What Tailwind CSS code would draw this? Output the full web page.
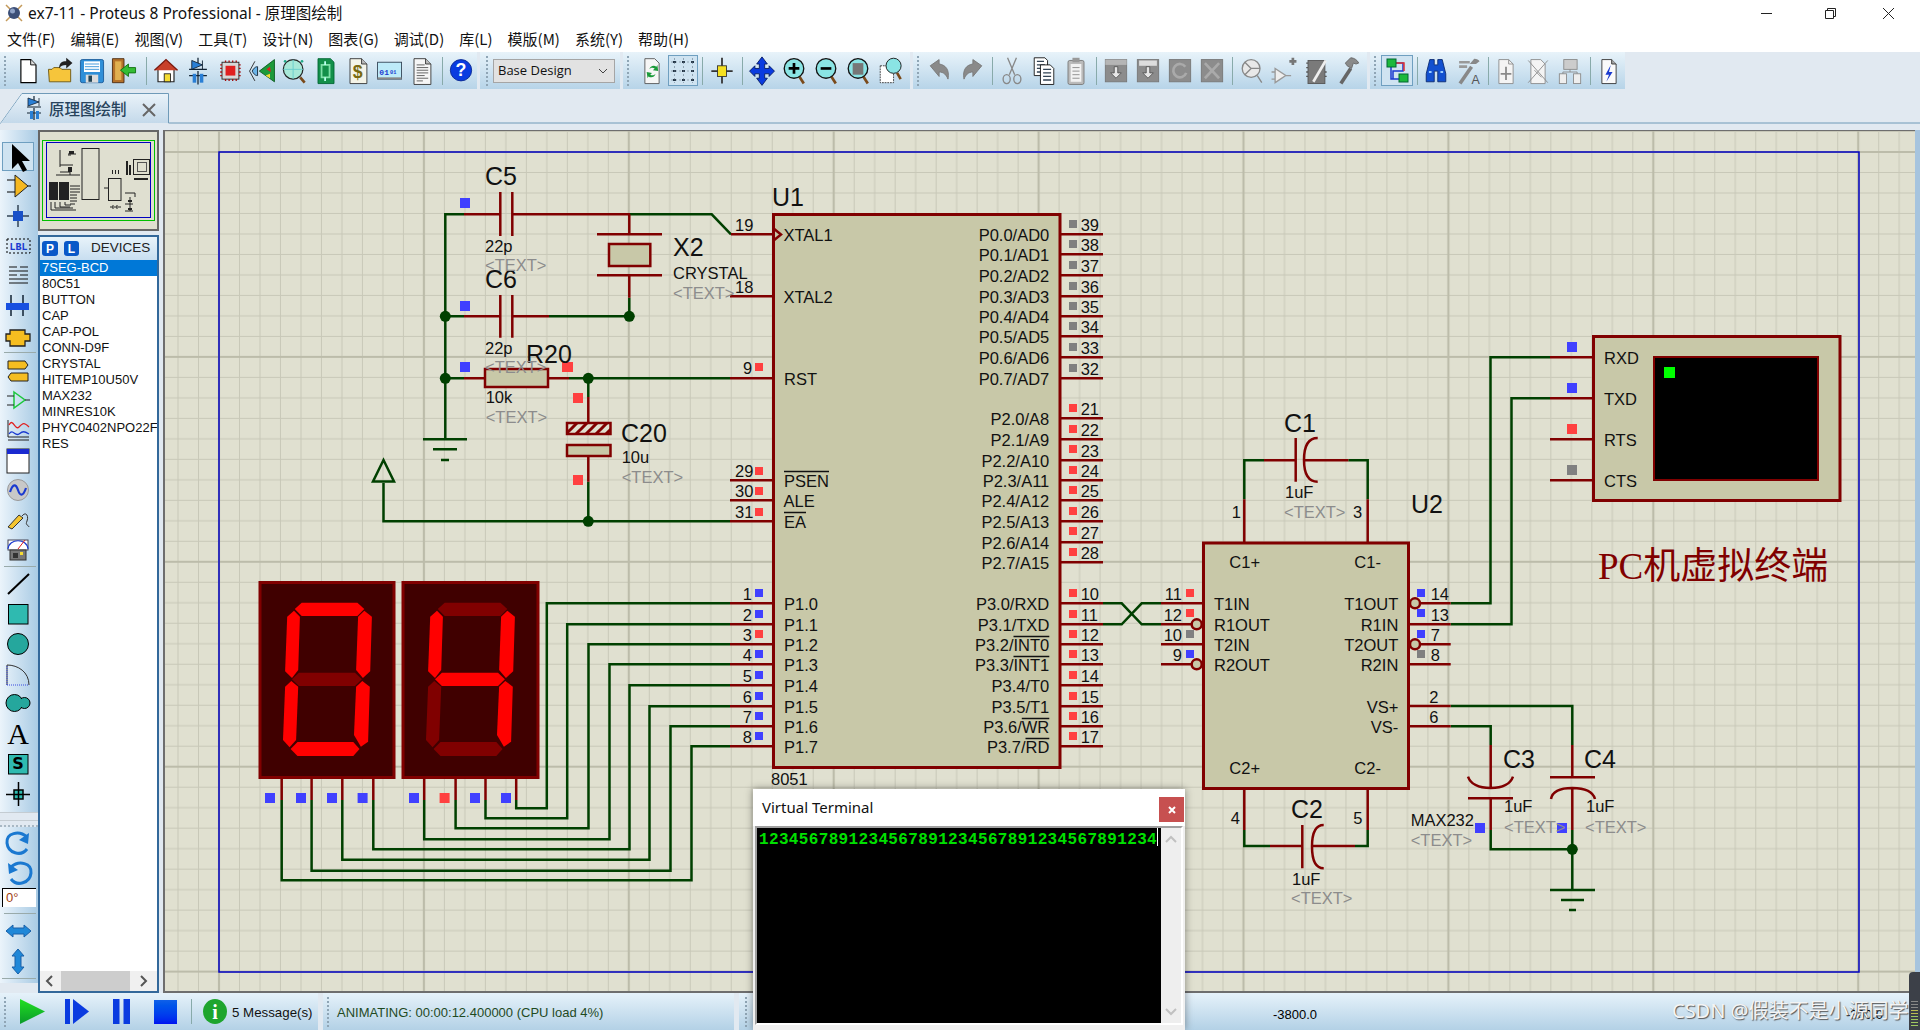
<!DOCTYPE html>
<html lang="zh">
<head>
<meta charset="UTF-8">
<title>ex7-11 - Proteus 8 Professional - 原理图绘制</title>
<script src="https://cdn.jsdelivr.net/npm/@tailwindcss/browser@4"></script>
</head>
<body class="w-[1920px] h-[1030px] overflow-hidden relative bg-[#e1e9f1] font-['Noto_Sans','Noto_Sans_CJK_SC',sans-serif]">
<div class="flex flex-col h-[1030px]">

  <!-- Title bar -->
  <div class="h-[26px] bg-white flex items-center shrink-0 relative">
    <svg class="w-[22px] h-[22px] ml-[3px]" viewBox="0 0 22 22"><path d="M3 3l16 16M19 3L3 19" stroke="#c49a5a" stroke-width="1.5"/><circle cx="11" cy="11" r="6" fill="#3c4f78"/><circle cx="9.500" cy="9" r="2.500" fill="#8fa3c8"/></svg>
    <span class="ml-[3px] mt-[2px] text-[15.5px] text-[#111] whitespace-nowrap">ex7-11 - Proteus 8 Professional - 原理图绘制</span>
    <svg class="absolute left-[1760px] top-0 w-[160px] h-[26px]" viewBox="0 0 160 26" fill="none" stroke="#222"><path d="M1 13.500h11"/><path d="M65.500 10.500h8v8h-8zM67.500 10.500v-2h8v8h-2"/><path d="M123 8l11 11M134 8l-11 11"/></svg>
  </div>

  <!-- Menu bar -->
  <div class="h-[26px] bg-white flex items-center gap-[15px] pl-[7px] text-[15px] text-[#111] shrink-0 font-['Noto_Sans_CJK_SC','Noto_Sans',sans-serif]">
    <span>文件(F)</span><span>编辑(E)</span><span>视图(V)</span><span>工具(T)</span><span>设计(N)</span><span>图表(G)</span><span>调试(D)</span><span>库(L)</span><span>模版(M)</span><span>系统(Y)</span><span>帮助(H)</span>
  </div>

  <!-- Toolbars -->
  <div class="h-[37px] flex shrink-0 gap-[3px]">
    <div class="w-[477px] flex items-center bg-gradient-to-b from-[#e8f3fa] to-[#b7d4e8] pl-[4px]">
      <div class="w-[2px] h-[30px] border-l-2 border-dotted border-[#8fa5b5] mr-[6px]"></div>
      <svg class="w-8 h-[37px] shrink-0" viewBox="-2 -2.500 36 41.600"><path d="M8 6h11l6 6v20H8z" fill="#fff" stroke="#000" stroke-width="1.300"/><path d="M19 6v6h6" fill="#ddd" stroke="#000"/></svg>
      <svg class="w-8 h-[37px] shrink-0" viewBox="-2 -2.500 36 41.600"><path d="M3 17h4l2-2h7l2 2h10v14H4z" fill="#f6c53b" stroke="#6a5410"/><path d="M15 16c0-6 3-8 8-8V4l7 6-7 6v-4c-4 0-6 1-8 4z" fill="#222"/></svg>
      <svg class="w-8 h-[37px] shrink-0" viewBox="-2 -2.500 36 41.600"><rect x="3" y="6" width="26" height="26" rx="2" fill="#2f8fd8" stroke="#1a5a9a"/><rect x="7" y="8" width="18" height="12" fill="#fff"/><path d="M8 11h16M8 14h16M8 17h16" stroke="#2f8fd8"/><rect x="9" y="23" width="14" height="9" fill="#dcdcdc"/><rect x="12" y="24" width="4" height="7" fill="#245"/></svg>
      <svg class="w-8 h-[37px] shrink-0" viewBox="-2 -2.500 36 41.600"><path d="M3 5h13v27H3z" fill="#b5722a" stroke="#4a2a10"/><path d="M6 8h7v21H6z" fill="#e0b050"/><path d="M29 15v6h-8v4l-9-7 9-7v4z" fill="#35bd35" stroke="#0f6f0f"/></svg>
      <div class="w-[7px] h-[28px] border-l border-[#8aa] ml-[3px] mr-[1px] translate-x-[3px]"></div>
      <svg class="w-8 h-[37px] shrink-0" viewBox="-2 -2.500 36 41.600"><path d="M7 17v14h18V17" fill="#fff" stroke="#222" stroke-width="1.300"/><path d="M3 18L16 6l13 12" fill="#c8402a" stroke="#7a1a10" stroke-width="1.500"/><rect x="14" y="22" width="7" height="9" fill="#f5dc32" stroke="#222"/></svg>
      <svg class="w-8 h-[37px] shrink-0" viewBox="-2 -2.500 36 41.600"><path d="M16 4v7M16 19v15M6 17h20M6 24h20" stroke="#123" stroke-width="1.400"/><path d="M9 7l12 5-12 5zM21 7v10" fill="#2a7fd5" stroke="#123"/><rect x="10" y="22" width="4" height="10" fill="#2a7fd5"/><rect x="18" y="22" width="4" height="10" fill="#2a7fd5"/></svg>
      <svg class="w-8 h-[37px] shrink-0" viewBox="-2 -2.500 36 41.600"><rect x="7" y="9" width="19" height="19" fill="#d8d8d8" stroke="#222"/><rect x="11" y="13" width="11" height="11" fill="#e02020"/><path d="M5 12h2M5 16h2M5 20h2M5 24h2M26 12h2M26 16h2M26 20h2M26 24h2M11 7v2M15 7v2M19 7v2M23 7v2M11 28v2M15 28v2M19 28v2M23 28v2" stroke="#a01010" stroke-width="1.500"/></svg>
      <svg class="w-8 h-[37px] shrink-0" viewBox="-2 -2.500 36 41.600"><path d="M2 19l6-11M2 19l6 11" stroke="#222" fill="none"/><path d="M5 19c2-4 4-5 6-5v10c-2 0-4-1-6-5z" fill="#6ab4e8" stroke="#123"/><path d="M30 6v25L13 19z" fill="#1d9a3a" stroke="#0a5a20"/><path d="M21 17l4-3 1 6z" fill="#e02020"/><path d="M20 24l5-2v5z" fill="#f5dc32"/></svg>
      <svg class="w-8 h-[37px] shrink-0" viewBox="-2 -2.500 36 41.600"><circle cx="15" cy="17" r="11" fill="#a8e8d8" stroke="#222" stroke-width="1.400"/><path d="M15 6v22M4 17h22" stroke="#6cc" /><path d="M23 26l5 6" stroke="#7a4a1a" stroke-width="3"/><circle cx="6" cy="8" r="1.500" fill="#2a8" /><circle cx="25" cy="8" r="1.500" fill="#2a8"/></svg>
      <svg class="w-8 h-[37px] shrink-0" viewBox="-2 -2.500 36 41.600"><path d="M7 5h14l4 4v24H7z" fill="#13904a" stroke="#063"/><rect x="11" y="12" width="9" height="14" fill="none" stroke="#7fe0a8" stroke-width="2"/><path d="M15 8v4M15 26v4" stroke="#bfe" stroke-width="2"/></svg>
      <svg class="w-8 h-[37px] shrink-0" viewBox="-2 -2.500 36 41.600"><path d="M7 5h13l6 6v22H7z" fill="#f4f4e8" stroke="#333"/><path d="M20 5v6h6" fill="#bbb" stroke="#333"/><text x="10" y="27" font-size="20" font-weight="700" fill="#7a6a10" class="font-['Liberation_Sans']">$</text></svg>
      <svg class="w-8 h-[37px] shrink-0" viewBox="-2 -2.500 36 41.600"><rect x="2" y="9" width="27" height="19" fill="#bdeaf8" stroke="#345"/><rect x="2" y="26" width="27" height="2" fill="#888"/><text x="4" y="23" font-size="9" font-weight="700" fill="#1a3ad0" class="font-['Liberation_Mono']">01</text><text x="16" y="22" font-size="6" font-weight="700" fill="#1a3ad0" class="font-['Liberation_Mono']">01</text></svg>
      <svg class="w-8 h-[37px] shrink-0" viewBox="-2 -2.500 36 41.600"><path d="M7 5h13l6 6v23H7z" fill="#f6f6f6" stroke="#333"/><path d="M20 5v6h6" fill="#bbb" stroke="#333"/><path d="M10 12h9M10 15h13M10 18h13M10 21h13M10 24h9M10 27h13M10 30h7" stroke="#555"/></svg>
      <div class="w-2 h-[28px] border-l border-[#8aa] translate-x-[4px]"></div>
      <svg class="w-8 h-[37px] shrink-0" viewBox="-2 -2.500 36 41.600"><circle cx="16" cy="18" r="12" fill="#0a3be0" stroke="#0a2a90"/><text x="16" y="25" text-anchor="middle" font-size="20" font-weight="700" fill="#fff" class="font-['Liberation_Sans']">?</text></svg>
    </div>
    <div class="w-[140px] flex items-center bg-gradient-to-b from-[#e8f3fa] to-[#b7d4e8] pl-[6px]">
      <div class="w-[2px] h-[30px] border-l-2 border-dotted border-[#8fa5b5] mr-[5px]"></div>
      <div class="w-[122px] h-[24px] bg-[#e2e2e2] border border-[#a5a5a5] flex items-center justify-between pl-[4px] pr-[6px] text-[13px] text-[#111] font-['Open_Sans',sans-serif]">
        <span>Base Design</span>
        <svg class="w-[10px] h-[6px]" viewBox="0 0 10 6" fill="none" stroke="#444"><path d="M1 1l4 4 4-4"/></svg>
      </div>
    </div>
    <div class="w-[287px] flex items-center bg-gradient-to-b from-[#e8f3fa] to-[#b7d4e8] pl-[4px]">
      <div class="w-[2px] h-[30px] border-l-2 border-dotted border-[#8fa5b5] mr-[7px]"></div>
      <svg class="w-8 h-[37px] shrink-0" viewBox="-2 -2.500 36 41.600"><path d="M8 5h11l5 5v23H8z" fill="#f6f6f6" stroke="#555"/><path d="M13 17c1-4 5-5 8-3l1-2 1 7-6-1 2-2c-2-1-4-1-6 1z" fill="#1c9a3a"/><path d="M20 22c-1 4-5 5-8 3l-1 2-1-7 6 1-2 2c2 1 4 1 6-1z" fill="#1c9a3a"/></svg>
      <div class="w-[30px] h-[31px] bg-[#cfe3f1] border border-[#6f9fc0] shrink-0 flex items-center justify-center"><svg class="w-[26px] h-[27px]" viewBox="0 0 26 27" fill="#234"><path d="M3 4h3v2H3zM12 4h3v2h-3zM21 4h3v2h-3zM3 13h3v2H3zM12 13h3v2h-3zM21 13h3v2h-3zM3 22h3v2H3zM12 22h3v2h-3zM21 22h3v2h-3z"/><path d="M1 5h24M1 14h24M1 23h24M4.500 1v25M13.500 1v25M22.500 1v25" stroke="#567" stroke-width=".5" stroke-dasharray="2 2"/></svg></div>
      <div class="w-2 h-[28px] border-l border-[#8aa] translate-x-[4px]"></div>
      <svg class="w-8 h-[37px] shrink-0" viewBox="-2 -2.500 36 41.600"><path d="M16 4v29M4 19h24" stroke="#333" stroke-width="2"/><rect x="11" y="13" width="10" height="12" fill="#f5e020" stroke="#333"/></svg>
      <div class="w-2 h-[28px] border-l border-[#8aa] translate-x-[4px]"></div>
      <svg class="w-8 h-[37px] shrink-0" viewBox="-2 -2.500 36 41.600"><path d="M16 3l6 8h-3v5h5v-3l6 6-6 6v-3h-5v5h3l-6 8-6-8h3v-5H8v3l-6-6 6-6v3h5v-5h-3z" fill="#0a3be0" stroke="#051a60"/></svg>
      <svg class="w-8 h-[37px] shrink-0" viewBox="-2 -2.500 36 41.600"><path d="M22 25l5 8" stroke="#7a4a1a" stroke-width="3"/><circle cx="16" cy="16" r="11" fill="#8ae4e4" stroke="#111" stroke-width="1.500"/><path d="M16 10v12M10 16h12" stroke="#000" stroke-width="3"/></svg>
      <svg class="w-8 h-[37px] shrink-0" viewBox="-2 -2.500 36 41.600"><path d="M22 25l5 8" stroke="#7a4a1a" stroke-width="3"/><circle cx="16" cy="16" r="11" fill="#8ae4e4" stroke="#111" stroke-width="1.500"/><path d="M10 16h12" stroke="#000" stroke-width="3"/></svg>
      <svg class="w-8 h-[37px] shrink-0" viewBox="-2 -2.500 36 41.600"><path d="M22 25l5 8" stroke="#7a4a1a" stroke-width="3"/><circle cx="16" cy="16" r="11" fill="#8ae4e4" stroke="#111" stroke-width="1.500"/><rect x="10" y="10" width="12" height="13" fill="#777"/></svg>
      <svg class="w-8 h-[37px] shrink-0" viewBox="-2 -2.500 36 41.600"><rect x="5" y="13" width="15" height="19" fill="#fff" stroke="#333" stroke-dasharray="2 1"/><path d="M24 21l4 7" stroke="#7a4a1a" stroke-width="3"/><circle cx="20" cy="13" r="8.500" fill="#8ae4e4" stroke="#111"/></svg>
    </div>
    <div class="w-[454px] flex items-center bg-gradient-to-b from-[#e8f3fa] to-[#b7d4e8] pl-[4px]">
      <div class="w-[2px] h-[30px] border-l-2 border-dotted border-[#8fa5b5] mr-[5px]"></div>
      <svg class="w-8 h-[37px] shrink-0" viewBox="-2 -2.500 36 41.600"><path d="M5 13l10-7v5c7 1 12 6 10 17-2-5-5-8-10-8v5z" fill="#8a8a8a" stroke="#777"/></svg>
      <svg class="w-8 h-[37px] shrink-0" viewBox="-2 -2.500 36 41.600"><path d="M27 13L17 6v5C10 12 5 17 7 28c2-5 5-8 10-8v5z" fill="#8a8a8a" stroke="#777"/></svg>
      <div class="w-2 h-[28px] border-l border-[#8aa] translate-x-[4px]"></div>
      <svg class="w-8 h-[37px] shrink-0" viewBox="-2 -2.500 36 41.600" fill="none" stroke="#888" stroke-width="1.500"><path d="M11 4l8 19M21 4l-8 19"/><ellipse cx="10" cy="28" rx="4" ry="5"/><ellipse cx="22" cy="28" rx="4" ry="5"/></svg>
      <svg class="w-8 h-[37px] shrink-0" viewBox="-2 -2.500 36 41.600"><path d="M5 4h12l3 3v17H5z" fill="#fff" stroke="#111"/><path d="M8 8h8M8 12h9M8 16h9M8 20h9" stroke="#345" stroke-width="1.500"/><path d="M12 12h11l4 4v18H12z" fill="#fff" stroke="#111"/><path d="M15 17h9M15 21h9M15 25h9M15 29h9" stroke="#345" stroke-width="1.500"/></svg>
      <svg class="w-8 h-[37px] shrink-0" viewBox="-2 -2.500 36 41.600"><rect x="7" y="7" width="18" height="27" rx="2" fill="#bbb" stroke="#777"/><rect x="12" y="4" width="8" height="5" fill="#999"/><rect x="10" y="11" width="12" height="20" fill="#f2f2f2"/><path d="M12 15h8M12 19h8M12 23h8M12 27h8" stroke="#888"/></svg>
      <div class="w-2 h-[28px] border-l border-[#8aa] translate-x-[4px]"></div>
      <svg class="w-8 h-[37px] shrink-0" viewBox="-2 -2.500 36 41.600"><rect x="4" y="6" width="24" height="25" fill="#8c8c8c" stroke="#777"/><rect x="4" y="6" width="24" height="6" fill="#b5b5b5"/><path d="M14 14h4v7h4l-6 6-6-6h4z" fill="#e6e6e6" stroke="#555"/></svg>
      <svg class="w-8 h-[37px] shrink-0" viewBox="-2 -2.500 36 41.600"><rect x="4" y="6" width="24" height="25" fill="#8c8c8c" stroke="#777"/><rect x="6" y="7" width="20" height="6" fill="#ddd"/><path d="M14 14h4v7h4l-6 6-6-6h4z" fill="#e6e6e6" stroke="#555"/></svg>
      <svg class="w-8 h-[37px] shrink-0" viewBox="-2 -2.500 36 41.600"><rect x="4" y="6" width="24" height="25" fill="#8c8c8c" stroke="#777"/><path d="M22 14a7.500 7.500 0 1 0 1 7" fill="none" stroke="#aaa" stroke-width="3"/></svg>
      <svg class="w-8 h-[37px] shrink-0" viewBox="-2 -2.500 36 41.600"><rect x="4" y="6" width="24" height="25" fill="#8c8c8c" stroke="#777"/><path d="M8 10l16 17M24 10L8 27" stroke="#aaa" stroke-width="3"/></svg>
      <div class="w-2 h-[28px] border-l border-[#8aa] translate-x-[4px]"></div>
      <svg class="w-8 h-[37px] shrink-0" viewBox="-2 -2.500 36 41.600" fill="none" stroke="#888" stroke-width="1.500"><circle cx="15" cy="16" r="10" fill="#e8e8e8"/><path d="M8 9l7 7-7 7M15 16h10M22 24l5 8"/></svg>
      <svg class="w-8 h-[37px] shrink-0" viewBox="-2 -2.500 36 41.600" fill="none" stroke="#999" stroke-width="1.500"><path d="M6 16v16l12-8zM2 20h4M2 28h4M18 24h6" fill="#eee"/><path d="M22 8h8M26 4v8" stroke="#777" stroke-width="3"/></svg>
      <svg class="w-8 h-[37px] shrink-0" viewBox="-2 -2.500 36 41.600"><rect x="7" y="7" width="19" height="26" fill="#7a7a7a" stroke="#555"/><path d="M13 31L27 7" stroke="#eee" stroke-width="3"/><path d="M5 10h2M5 15h2M5 20h2M5 25h2M26 20h2M26 25h2" stroke="#555" stroke-width="1.500"/></svg>
      <svg class="w-8 h-[37px] shrink-0" viewBox="-2 -2.500 36 41.600"><path d="M8 33l11-17" stroke="#666" stroke-width="4"/><path d="M13 10l6-6c4 0 8 3 9 6l-3 1-3-1-2 6-5-3z" fill="#8a8a8a" stroke="#666"/></svg>
    </div>
    <div class="w-[255px] flex items-center bg-gradient-to-b from-[#e8f3fa] to-[#b7d4e8] pl-[4px]">
      <div class="w-[2px] h-[30px] border-l-2 border-dotted border-[#8fa5b5] mr-[5px]"></div>
      <div class="w-8 h-[31px] bg-[#cfe3f1] border border-[#6f9fc0] shrink-0 flex items-center justify-center"><svg class="w-[26px] h-[27px]" viewBox="0 0 26 27"><path d="M12 6h7v8H9v8h8M7 9v13h9" fill="none" stroke="#1a3ad0" stroke-width="1.500"/><path d="M12 6h8v8" fill="none" stroke="#e03030" stroke-width="1.500"/><rect x="3" y="2" width="9" height="8" fill="#1cb83c" stroke="#063"/><rect x="15" y="17" width="9" height="8" fill="#1cb83c" stroke="#063"/></svg></div>
      <div class="w-2 h-[28px] border-l border-[#8aa] translate-x-[4px]"></div>
      <svg class="w-8 h-[37px] shrink-0" viewBox="-2 -2.500 36 41.600"><path d="M9 6h5v6h4V6h5l4 16v9h-9V19h-4v12H5v-9z" fill="#1250d0" stroke="#0a2a70"/><path d="M8 20h3M21 20h3" stroke="#9cf" stroke-width="2"/></svg>
      <svg class="w-8 h-[37px] shrink-0" viewBox="-2 -2.500 36 41.600"><path d="M7 33l13-19" stroke="#888" stroke-width="4"/><path d="M6 9h12M6 14h9" stroke="#999" stroke-width="3"/><path d="M18 11l5-6c3 0 5 1 6 3l-4 3z" fill="#888"/><text x="20" y="33" font-size="14" fill="#555" class="font-['Liberation_Sans']">A</text></svg>
      <div class="w-2 h-[28px] border-l border-[#8aa] translate-x-[4px]"></div>
      <svg class="w-8 h-[37px] shrink-0" viewBox="-2 -2.500 36 41.600" fill="none" stroke="#8a8a8a"><path d="M8 6h11l5 5v22H8z" fill="#f4f4f4"/><path d="M19 6v5h5"/><path d="M16 14v15M10 22h12" stroke-width="2"/></svg>
      <svg class="w-8 h-[37px] shrink-0" viewBox="-2 -2.500 36 41.600" fill="none" stroke="#8a8a8a"><path d="M8 6h11l5 5v22H8z" fill="#f4f4f4"/><path d="M5 7l22 25M27 7L5 32M12 18l8 8"/></svg>
      <svg class="w-8 h-[37px] shrink-0" viewBox="-2 -2.500 36 41.600" fill="none" stroke="#8a8a8a"><rect x="9" y="6" width="15" height="11" fill="#ccc"/><rect x="4" y="22" width="8" height="11" fill="#eee"/><rect x="20" y="22" width="8" height="11" fill="#eee"/><path d="M16 17v3H8v2M16 20h8v2"/></svg>
      <div class="w-2 h-[28px] border-l border-[#8aa] translate-x-[4px]"></div>
      <svg class="w-8 h-[37px] shrink-0" viewBox="-2 -2.500 36 41.600"><path d="M8 6h11l5 5v22H8z" fill="#fafafa" stroke="#333"/><path d="M19 6v5h5" fill="#aaa" stroke="#333"/><path d="M18 12l-6 11h4l-3 8 7-11h-4z" fill="#1a3ad0"/></svg>
    </div>
  </div>

  <!-- Tab row -->
  <div class="h-[41px] relative shrink-0 flex items-start">
    <svg class="absolute left-0 top-0 w-[1920px] h-[41px]" viewBox="0 0 1920 41"><defs><linearGradient id="tabg" x1="0" y1="0" x2="0" y2="1"><stop offset="0" stop-color="#e9f2f9"/><stop offset="1" stop-color="#c4d9ea"/></linearGradient></defs><path d="M0.500 34.500L22 4.500h146.500v29.500H1920" fill="none" stroke="#6f9ab8"/><path d="M1 34L22 5h146v29z" fill="url(#tabg)"/></svg>
    <svg class="relative ml-[26px] mt-[7px] w-4 h-[24px]" viewBox="0 0 16 24"><path d="M8 0v5M8 12v12M1 11h14M1 17h14" stroke="#123" stroke-width="1.200"/><path d="M2 2l11 4-11 4zM13 2v8" fill="#2a7fd5" stroke="#123" stroke-width=".8"/><rect x="4" y="15" width="3" height="8" fill="#2a7fd5"/><rect x="10" y="15" width="3" height="8" fill="#2a7fd5"/></svg>
    <span class="relative ml-[7px] mt-[7px] text-[15.5px] leading-[24px] text-[#27435c] font-['Noto_Sans_CJK_SC',sans-serif] font-medium">原理图绘制</span>
    <svg class="relative ml-[15px] mt-[14px] w-[14px] h-[14px]" viewBox="0 0 14 14"><path d="M1 1l12 12M13 1L1 13" stroke="#666" stroke-width="2"/></svg>
  </div>

  <!-- Main -->
  <div class="flex-1 flex min-h-0">
    <!-- Side toolbar -->
    <div class="w-[38px] shrink-0 h-[863px] flex flex-col bg-[#e1e9f1]">
      <div class="h-[682px] bg-gradient-to-r from-[#ebf4fb] to-[#a9cbe4] flex flex-col relative">
        <div class="absolute left-[2px] top-[12px] w-[32px] h-[29px] bg-[#cfe3f1] border border-[#6f9fc0]"></div>
        <svg class="relative w-[38px] h-[682px]" viewBox="0 130 38 682">
          <!-- arrow --><path d="M12 144v25l6-6 5 9 4-2-5-9h8z" fill="#000"/>
          <!-- component --><path d="M15 175l13 11-13 11z" fill="#f5b820" stroke="#222"/><path d="M7 180h8M7 192h8M28 186h3" stroke="#000"/>
          <!-- junction --><path d="M18 205v22M7 216h22" stroke="#345" stroke-width="1.500"/><rect x="13" y="211" width="10" height="10" fill="#1850c8"/>
          <!-- label --><rect x="7" y="239" width="23" height="14" fill="none" stroke="#000" stroke-dasharray="2 2"/><text x="18.500" y="250" text-anchor="middle" font-size="10" fill="#1a3ad0" class="font-['Liberation_Mono']" font-weight="700">LBL</text>
          <!-- script --><path d="M9 267h8M20 267h8M9 271h19M9 275h8M20 275h8M9 279h19M9 283h19" stroke="#111" stroke-width="1.200"/>
          <!-- bus --><path d="M11 295v8M23 295v8M11 310v6M23 310v6" stroke="#123" stroke-width="1.500"/><rect x="6" y="303" width="23" height="7" fill="#1850e0"/>
          <!-- subcircuit --><path d="M10 330h15v4h5v7h-5v5H10v-5H6v-7h4z" fill="#f5bd20" stroke="#222" stroke-width="1.300"/>
          <path d="M4 352.500h32" stroke="#9aa"/>
          <!-- terminals --><path d="M8 361h17l3 4-3 4H8z" fill="#f5bd20" stroke="#222"/><path d="M28 373H11l-3 4 3 4h17z" fill="#f5bd20" stroke="#222"/>
          <!-- port --><path d="M14 392l11 8-11 8z" fill="none" stroke="#1cc83c" stroke-width="1.500"/><path d="M7 396h7M7 405h7M25 400h5" stroke="#222"/>
          <!-- graph --><path d="M8 420v17h21M8 440h21" fill="none" stroke="#222"/><path d="M9 425c4-8 6 6 10 2s5-5 10 0" fill="none" stroke="#e02020" stroke-width="1.300"/><path d="M9 434c4-6 6 3 10 0s5-3 10 0" fill="none" stroke="#1a3ad0" stroke-width="1.300"/>
          <!-- tape --><rect x="7" y="449" width="22" height="24" fill="#fff" stroke="#222"/><rect x="7" y="449" width="22" height="5" fill="#1a2ad0"/>
          <!-- generator --><circle cx="18" cy="490" r="10.500" fill="#c8c8c8" stroke="#999"/><path d="M10 492c3-9 6-8 8-2s5 7 8-2" fill="none" stroke="#1a3ad0" stroke-width="2.200"/>
          <!-- probe --><path d="M8 527l11-12 4 3-11 11z" fill="#f5c530" stroke="#333"/><path d="M22 516c4-5 7 0 5 5s1 3 2 6" fill="none" stroke="#333"/>
          <!-- meter --><rect x="8" y="540" width="20" height="10" fill="#fff" stroke="#445"/><path d="M8 549c1-11 19-11 20 0" fill="#fff" stroke="#1a3ad0" stroke-width="1.200"/><path d="M18 549l7-9" stroke="#e02020"/><rect x="10" y="550" width="16" height="10" fill="#777" stroke="#333"/><rect x="13" y="553" width="5" height="5" fill="#333"/><rect x="20" y="552" width="3" height="3" fill="#f5dc32"/>
          <path d="M4 566.500h32" stroke="#9aa"/>
          <!-- 2D --><path d="M8 594l21-20" stroke="#000" stroke-width="2"/>
          <rect x="8.500" y="604.500" width="19.500" height="19.500" fill="#2fbab0" stroke="#000"/>
          <circle cx="18" cy="644" r="10.500" fill="#25a79d" stroke="#000"/>
          <path d="M7 685v-20c11 0 22 7 22 20" fill="none" stroke="#333"/><path d="M7 685h22M7 685v-20" stroke="#3a4ae0" stroke-dasharray="1 1" fill="none"/>
          <circle cx="14.500" cy="703" r="8.500" fill="#25a79d" stroke="#000"/><circle cx="24.500" cy="703" r="5.500" fill="#25a79d" stroke="#000"/><rect x="17" y="699" width="6" height="8" fill="#25a79d"/>
          <text x="18" y="744" text-anchor="middle" font-size="30" fill="#000" class="font-['Liberation_Serif']">A</text>
          <rect x="8.500" y="754.500" width="19.500" height="19.500" fill="#2fbab0" stroke="#000"/><text x="18" y="769" text-anchor="middle" font-size="16" font-weight="700" fill="#000" class="font-['DejaVu_Sans']">S</text>
          <rect x="14" y="790" width="9" height="9" fill="#2fbab0"/><path d="M6 794.500h24M18.500 782v24M14 790h9v9h-9z" stroke="#000" fill="none" stroke-width="1.500"/>
        </svg>
      </div>
      <div class="h-[9px] border-b border-t border-[#c4ccd2]"></div>
      <div class="h-[6px] border-b-2 border-dotted border-[#a8b8c4]"></div>
      <div class="h-[156px] bg-gradient-to-r from-[#ebf4fb] to-[#a9cbe4]">
        <svg class="w-[38px] h-[156px]" viewBox="0 826 38 156">
          <path d="M27 836c-8-7-21-4-20 6s14 14 20 6" fill="none" stroke="#1a78d0" stroke-width="3"/><path d="M29 832l-1 11-9-4z" fill="#1a78d0"/>
          <path d="M11 866c8-7 21-4 20 6s-14 14-20 6" fill="none" stroke="#1a78d0" stroke-width="3"/><path d="M8 862l1 11 9-4z" fill="#1a78d0"/>
          <path d="M4 912.500h32" stroke="#9aa"/>
          <path d="M6 930l7-6v3h11v-3l7 6-7 6v-3H13v3z" fill="#2088d8" stroke="#1a60a8"/>
          <path d="M18 948l6 7h-3v11h3l-6 7-6-7h3v-11h-3z" fill="#2088d8" stroke="#1a60a8"/>
          <path d="M2 977.500h34" stroke="#9aa"/>
        </svg>
      </div>
      <div class="absolute left-[2px] top-[888px] w-[34px] h-[19px] bg-white border-l border-t border-black text-[13px] leading-[18px] pl-[3px] text-[#a04010] font-['Liberation_Sans']">0°</div>
    </div>

    <!-- Panels -->
    <div class="w-[121px] shrink-0 flex flex-col gap-[4px]">
      <div class="h-[101px] bg-[#dfdfd0] border-2 border-[#666666]">
        <svg class="w-[117px] h-[97px]" viewBox="40 132 117 97">
          <rect x="42.500" y="140.500" width="112" height="80" fill="none" stroke="#00c000" stroke-width="1"/>
          <rect x="46.500" y="142.500" width="104" height="75" fill="none" stroke="#0000c0"/>
          <rect x="82" y="148.500" width="17" height="51" fill="none" stroke="#222"/>
          <rect x="108.500" y="178.500" width="12.500" height="22" fill="none" stroke="#222"/>
          <rect x="133.500" y="159.500" width="16" height="15" fill="none" stroke="#222"/><rect x="137.500" y="162.500" width="9" height="9" fill="none" stroke="#555"/>
          <rect x="134" y="178" width="14" height="2" fill="#222"/>
          <path d="M127 175v-14M130 175v-10" stroke="#222" stroke-width="2"/>
          <path d="M60 150v17M68 154h8M68 155h3M60 165h13M60 172h10v3M56 175h24M104 188h5" stroke="#222" fill="none"/>
          <rect x="69" y="151" width="5" height="3" fill="#222"/><rect x="68" y="167" width="4" height="5" fill="#222"/>
          <rect x="115" y="170" width="1" height="4" fill="#222"/><rect x="112" y="170" width="1" height="4" fill="#222"/><rect x="118" y="170" width="1" height="4" fill="#222"/>
          <path d="M110 207h3M114 207h3M118 207h3M113 205v4M117 205v4" stroke="#222"/>
          <rect x="49" y="182" width="9" height="18" fill="#222"/><rect x="59" y="182" width="10" height="18" fill="#222"/>
          <path d="M70 186h10M70 189h10M70 192h10M70 195h7M70 198h7M70 201h7M70 204h5M51 202v8h25M55 202v6h18M60 202v5h10M65 202v3h6" stroke="#222" fill="none"/>
          <path d="M125 193h10v4M125 204h8M125 211h8M130 197v14" stroke="#222" fill="none"/>
          <path d="M128 201h4M128 209h4" stroke="#222" stroke-width="2"/>
        </svg>
      </div>
      <div class="h-[758px] border-2 border-[#33689a] bg-white flex flex-col overflow-hidden">
        <div class="h-[23px] shrink-0 bg-gradient-to-b from-[#e8f3fa] to-[#c8def0] flex items-center pl-[2px] font-['Liberation_Sans']">
          <span class="w-[16px] h-[15px] rounded-[3px] bg-[#0a58c8] text-white text-[12px] font-bold flex items-center justify-center">P</span>
          <span class="w-[15px] h-[15px] rounded-[3px] bg-[#0a58c8] text-white text-[12px] font-bold flex items-center justify-center ml-[6px]">L</span>
          <span class="ml-[12px] text-[13.5px] text-[#222]">DEVICES</span>
        </div>
        <div class="flex-1 text-[13px] leading-[16px] text-[#111] font-['Liberation_Sans'] whitespace-nowrap overflow-hidden">
          <div class="bg-[#0078d7] text-white pl-[2px] h-[16px]">7SEG-BCD</div>
          <div class="pl-[2px]">80C51</div>
          <div class="pl-[2px]">BUTTON</div>
          <div class="pl-[2px]">CAP</div>
          <div class="pl-[2px]">CAP-POL</div>
          <div class="pl-[2px]">CONN-D9F</div>
          <div class="pl-[2px]">CRYSTAL</div>
          <div class="pl-[2px]">HITEMP10U50V</div>
          <div class="pl-[2px]">MAX232</div>
          <div class="pl-[2px]">MINRES10K</div>
          <div class="pl-[2px]">PHYC0402NPO22F</div>
          <div class="pl-[2px]">RES</div>
        </div>
        <div class="h-[20px] shrink-0 bg-[#f0f0f0] flex items-center">
          <svg class="w-[21px] h-[20px]" viewBox="0 0 21 20" fill="none" stroke="#555" stroke-width="2"><path d="M12 5l-5 5 5 5"/></svg>
          <div class="w-[69px] h-[20px] bg-[#cdcdcd]"></div>
          <svg class="w-[27px] h-[20px]" viewBox="0 0 27 20" fill="none" stroke="#555" stroke-width="2"><path d="M11 5l5 5-5 5"/></svg>
        </div>
      </div>
    </div>

    <!-- Schematic canvas -->
    <div class="w-[1752px] ml-[4px] h-[863px] shrink-0 bg-[#e0e0d0] border-l-2 border-b-2 border-t border-[#6e6e6e] overflow-hidden">
      <svg class="w-[1750px] h-[860px] font-['Liberation_Sans',sans-serif]" viewBox="165 131 1750 860">
        <defs>
          <pattern id="grid" x="219" y="152" width="204.900" height="204.900" patternUnits="userSpaceOnUse">
            <path d="M20.490 0v204.900M40.980 0v204.900M61.470 0v204.900M81.960 0v204.900M102.450 0v204.900M122.940 0v204.900M143.430 0v204.900M163.920 0v204.900M184.410 0v204.900M0 20.490h204.900M0 40.980h204.900M0 61.470h204.900M0 81.960h204.900M0 102.450h204.900M0 122.940h204.900M0 143.430h204.900M0 163.920h204.900M0 184.410h204.900" stroke="#c8c8b8" stroke-width="1" fill="none"/>
            <path d="M0 0v204.900M204.900 0v204.900M0 0h204.900M0 204.900h204.900" stroke="#bcbcaa" stroke-width="2.200" fill="none"/>
          </pattern>
          <pattern id="hatch" x="0" y="0" width="10" height="10" patternUnits="userSpaceOnUse"><rect width="10" height="10" fill="#e0e0d0"/><path d="M-2 12L12 -2M-7 7L7 -7M3 17L17 3" stroke="#800000" stroke-width="3"/></pattern>
        </defs>
        <rect x="165" y="131" width="1750" height="860" fill="url(#grid)"/>
        <rect x="219" y="152" width="1640" height="820" fill="none" stroke="#0000c0" stroke-width="1.500"/>

        <!-- Green wires -->
        <g fill="none" stroke="#004000" stroke-width="2.500">
          <path d="M464 214.300H445.300V439M630 214.300H711.700L731 234.300M445.300 316.300H464M549 316.300H629.300V297.700M445.300 378.300H464M569 378.300H730M588.300 378.300V397M588.300 481.700V521M383.500 483V521.300H730"/>
          <path d="M730 603.300H546.800V808.300H516.200V800M730 624.300H567.200V818.300H485.500V800M730 644.300H588.500V828.300H455.600V800M730 664.300H609.500V839.300H424.200V800M730 685.300H629.500V849.300H373.300V800M730 706.300H649.500V859.700H342.300V800M730 726.300H670.500V870.700H311.600V800M730 746.300H691.500V880.300H281.700V800"/>
          <path d="M1103 603.300H1121.700L1141.700 624.300H1161M1103 624.300H1121.700L1141.700 603.300H1161"/>
          <path d="M1264 460.300H1244.300V499.300M1348.300 460.300H1367.700V499.300M1270 846H1244.300V830M1355 846H1367.700V830"/>
          <path d="M1450.700 603.300H1490.500V357.300H1550M1450.700 624.300H1511.500V398.300H1550"/>
          <path d="M1450.700 706H1572.300V745M1450.700 726.300H1490.700V745M1490.700 830V849.300H1572.300M1572.300 830V890"/>
          <path d="M423 439.300h44M433 449.300h24M441 460h8M1550 890h45M1561 900h23M1569 910h7"/>
          <path d="M383.500 460L373 481.500H394Z" stroke-width="2.500"/>
        </g>
        <g fill="#004000">
          <circle cx="445.300" cy="316.300" r="5.500"/><circle cx="629.300" cy="316.300" r="5.500"/><circle cx="445.300" cy="378.300" r="5.500"/><circle cx="588.300" cy="378.300" r="5.500"/><circle cx="588.300" cy="521.300" r="5.500"/><circle cx="1572.300" cy="849.300" r="5.500"/>
        </g>

        <!-- Seven segment displays -->
        <rect x="260" y="582.500" width="134" height="195" fill="#400000" stroke="#800000" stroke-width="3"/>
        <rect x="403" y="582.500" width="135" height="195" fill="#400000" stroke="#800000" stroke-width="3"/>
        <g fill="#ff0000">
          <path d="M294.800 609L301.700 602.700H357.400L364.300 609L357.400 616H301.700Z"/>
          <path d="M294 610.700L299.900 616.700L298.200 670L292 678L285.100 671.300L287.200 616.700Z"/>
          <path d="M364.300 610.700L371.900 616.700L370.200 671.300L362.900 678L356.100 670L358.100 616.700Z"/>
          <path d="M291.300 681L298.200 686.700L296.100 740L289.600 747.300L283 740L285.100 686.700Z"/>
          <path d="M362.300 681L369.800 686.700L368.100 741.700L360.900 746.700L354 735L356.100 686.700Z"/>
          <path d="M290.600 749L297.500 742H353.300L359.500 749L353.300 756H297.500Z"/>
        </g>
        <path fill="#800000" d="M292 679.300L298.900 672.700H355L361.900 679.300L355 686H298.900Z"/>
        <g transform="translate(143 0)">
          <g fill="#800000">
            <path d="M294.800 609L301.700 602.700H357.400L364.300 609L357.400 616H301.700Z"/>
            <path d="M291.300 681L298.200 686.700L296.100 740L289.600 747.300L283 740L285.100 686.700Z"/>
            <path d="M290.600 749L297.500 742H353.300L359.500 749L353.300 756H297.500Z"/>
          </g>
          <g fill="#ff0000">
            <path d="M294 610.700L299.900 616.700L298.200 670L292 678L285.100 671.300L287.200 616.700Z"/>
            <path d="M364.300 610.700L371.900 616.700L370.200 671.300L362.900 678L356.100 670L358.100 616.700Z"/>
            <path d="M292 679.300L298.900 672.700H355L361.900 679.300L355 686H298.900Z"/>
            <path d="M362.300 681L369.800 686.700L368.100 741.700L360.900 746.700L354 735L356.100 686.700Z"/>
          </g>
        </g>

        <!-- Maroon pins and parts -->
        <g fill="none" stroke="#800000" stroke-width="2.500">
          <path d="M464 214.300H500.300M512.300 214.300H630M629.300 214.300V234.300M500.300 192V236M512.300 192V236"/>
          <path d="M597 234.300H662M597 275.300H662M629.300 275.300V297.700M464 316.300H500.300M512.300 316.300H549M500.300 295V337.700M512.300 295V337.700"/>
          <path d="M464 378.300H485M548 378.300H569M588.300 397V422.700M588.300 456V481.700"/>
          <path d="M731 234.300H773M730 296.300H773M730 378.300H773M730 480.300H773M730 500.300H773M730 521.300H773"/>
          <path d="M730 603.300H773M730 624.300H773M730 644.300H773M730 664.300H773M730 685.300H773M730 706.300H773M730 726.300H773M730 746.300H773"/>
          <path d="M1060 234.300h43M1060 254.300h43M1060 275.300h43M1060 296.300h43M1060 316.300h43M1060 336.300h43M1060 357.300h43M1060 378.300h43"/>
          <path d="M1060 418.300h43M1060 439.300h43M1060 460.300h43M1060 480.300h43M1060 500.300h43M1060 521.300h43M1060 542.300h43M1060 562.300h43"/>
          <path d="M1060 603.300h43M1060 624.300h43M1060 644.300h43M1060 664.300h43M1060 685.300h43M1060 706.300h43M1060 726.300h43M1060 746.300h43"/>
          <path d="M281.700 778V800M311.600 778V800M342.300 778V800M373.300 778V800M424.200 778V800M455.600 778V800M485.500 778V800M516.200 778V800"/>
          <path d="M1161 603.300h42M1161 624.300h42M1161 644.300h42M1161 664.300h42M1408 603.300h42.700M1408 624.300h42.700M1408 644.300h42.700M1408 664.300h42.700M1408 706h42.700M1408 726.300h42.700"/>
          <path d="M1244.300 499.300V542.700M1367.700 499.300V542.700M1244.300 788V830M1367.700 788V830"/>
          <path d="M1264 460.300h31.700M1304 460.300h44.300M1295.700 438V481.700M1317.700 438Q1304 438 1304 460Q1304 481.700 1317.700 481.700"/>
          <path d="M1270 846h32.300M1312 846h43M1302.300 825V868.300M1323.700 825Q1312 825 1312 846.500Q1312 868.300 1323.700 868.300"/>
          <path d="M1490.700 745V788M1468 776.700Q1472 788 1490.700 788Q1509 788 1513 776.700M1468 798.300H1513M1490.700 798.300V830"/>
          <path d="M1572.300 745V777.300M1550 777.300H1595M1551 799Q1553 788 1572.300 788Q1592 788 1595 799M1572.300 788V830"/>
          <path d="M1550 357.300h43M1550 398.300h43M1550 439.300h43M1550 480.300h43"/>
        </g>

        <rect x="609" y="244" width="41.300" height="22" fill="#c8c8a8" stroke="#800000" stroke-width="2.500"/>
        <rect x="485" y="369" width="63" height="18" fill="#c8c8a8" stroke="#800000" stroke-width="2.500"/>
        <rect x="567" y="423" width="43.500" height="11" fill="url(#hatch)" stroke="#800000" stroke-width="2.500"/>
        <rect x="567" y="445" width="43.500" height="11" fill="#c8c8a8" stroke="#800000" stroke-width="2.500"/>

        <!-- U1 -->
        <rect x="773.500" y="214.500" width="286.500" height="553" fill="#c8c8a8" stroke="#800000" stroke-width="3"/>
        <path d="M773 228L781 234.500L773 241" fill="none" stroke="#800000" stroke-width="2.500"/>
        <!-- U2 -->
        <rect x="1203.500" y="543" width="205" height="245.500" fill="#c8c8a8" stroke="#800000" stroke-width="3"/>
        <g fill="#c8c8a8" stroke="#800000" stroke-width="2.500">
          <circle cx="1196.700" cy="624.300" r="5"/><circle cx="1196.700" cy="664.300" r="5"/><circle cx="1415" cy="603.300" r="5"/><circle cx="1415" cy="644.300" r="5"/>
        </g>
        <!-- Virtual terminal part -->
        <rect x="1593.500" y="336.500" width="246.500" height="164" fill="#c8c8a8" stroke="#800000" stroke-width="3"/>
        <rect x="1654" y="357" width="164" height="123" fill="#000" stroke="#800000" stroke-width="2"/>
        <rect x="1664" y="367" width="11" height="11" fill="#00ff00"/>

        <!-- Logic state squares -->
        <path fill="#4040ff" d="M460 198h10v10h-10zM460 301h10v10h-10zM460 362h10v10h-10zM265 793h10v10h-10zM296 793h10v10h-10zM327 793h10v10h-10zM357.600 793h10v10h-10zM409 793h10v10h-10zM470 793h10v10h-10zM501 793h10v10h-10zM755 589h8v8h-8zM755 610h8v8h-8zM755 650h8v8h-8zM755 671h8v8h-8zM755 692h8v8h-8zM755 712h8v8h-8zM755 732h8v8h-8zM1186 650h8v8h-8zM1417 589h8v8h-8zM1417 609h8v8h-8zM1417 630h8v8h-8zM1567 342h10v10h-10zM1567 383h10v10h-10zM1475 823h10v10h-10zM1557 823h10v10h-10z"/>
        <path fill="#ff4040" d="M562 362h11v10h-11zM573 393h10v10h-10zM573 475h10v10h-10zM439.600 793h10v10h-10zM755 363h8v8h-8zM755 467h8v8h-8zM755 487h8v8h-8zM755 508h8v8h-8zM755 630h8v8h-8zM1069 404h8v8h-8zM1069 425h8v8h-8zM1069 445h8v8h-8zM1069 466h8v8h-8zM1069 486h8v8h-8zM1069 507h8v8h-8zM1069 527h8v8h-8zM1069 548h8v8h-8zM1069 589h8v8h-8zM1069 610h8v8h-8zM1069 630h8v8h-8zM1069 650h8v8h-8zM1069 671h8v8h-8zM1069 692h8v8h-8zM1069 712h8v8h-8zM1069 732h8v8h-8zM1186 589h8v8h-8zM1186 609h8v8h-8zM1567 424h10v10h-10z"/>
        <path fill="#808080" d="M1069 220h8v8h-8zM1069 240h8v8h-8zM1069 261h8v8h-8zM1069 282h8v8h-8zM1069 302h8v8h-8zM1069 322h8v8h-8zM1069 343h8v8h-8zM1069 364h8v8h-8zM1186 630h8v8h-8zM1417 650h8v8h-8zM1567 465h10v10h-10z"/>

        <!-- Designators -->
        <g font-size="25" fill="#111">
          <text x="485" y="185">C5</text><text x="485" y="287.700">C6</text><text x="673" y="256">X2</text><text x="526" y="362.700">R20</text><text x="621" y="441.700">C20</text><text x="772" y="206">U1</text><text x="1284" y="431.700">C1</text><text x="1411" y="513.300">U2</text><text x="1291" y="818.300">C2</text><text x="1503" y="768.300">C3</text><text x="1584" y="768.300">C4</text>
        </g>
        <!-- Values -->
        <g font-size="16.500" fill="#111">
          <text x="485" y="252">22p</text><text x="485" y="354">22p</text><text x="673" y="279">CRYSTAL</text><text x="485.700" y="402.700">10k</text><text x="621.700" y="463">10u</text><text x="771" y="785">8051</text>
          <text x="1285" y="497.700">1uF</text><text x="1292" y="885">1uF</text><text x="1504" y="811.700">1uF</text><text x="1586" y="811.700">1uF</text><text x="1410.700" y="826">MAX232</text>
        </g>
        <g font-size="16.500" fill="#8c8c8c">
          <text x="485" y="270.700">&lt;TEXT&gt;</text><text x="485" y="373">&lt;TEXT&gt;</text><text x="673" y="299">&lt;TEXT&gt;</text><text x="485.700" y="423">&lt;TEXT&gt;</text><text x="621.700" y="483">&lt;TEXT&gt;</text><text x="1284" y="517.700">&lt;TEXT&gt;</text><text x="1291" y="904.300">&lt;TEXT&gt;</text><text x="1504" y="832.700">&lt;TEXT&gt;</text><text x="1585" y="832.700">&lt;TEXT&gt;</text><text x="1410.700" y="845.700">&lt;TEXT&gt;</text>
        </g>

        <!-- Pin labels -->
        <g font-size="16.500" fill="#111">
          <text x="783.500" y="241">XTAL1</text><text x="783.500" y="303.300">XTAL2</text><text x="784" y="385">RST</text><text x="784" y="486.700">PSEN</text><text x="783.500" y="507">ALE</text><text x="784" y="527.700">EA</text>
          <text x="784" y="610">P1.0</text><text x="784" y="631">P1.1</text><text x="784" y="651">P1.2</text><text x="784" y="671">P1.3</text><text x="784" y="692">P1.4</text><text x="784" y="713">P1.5</text><text x="784" y="733">P1.6</text><text x="784" y="753">P1.7</text>
          <g text-anchor="end">
            <text x="1049.300" y="241">P0.0/AD0</text><text x="1049.300" y="261.300">P0.1/AD1</text><text x="1049.300" y="282">P0.2/AD2</text><text x="1049.300" y="303">P0.3/AD3</text><text x="1049.300" y="323">P0.4/AD4</text><text x="1049.300" y="343">P0.5/AD5</text><text x="1049.300" y="364">P0.6/AD6</text><text x="1049.300" y="385">P0.7/AD7</text>
            <text x="1049.300" y="425">P2.0/A8</text><text x="1049.300" y="446">P2.1/A9</text><text x="1049.300" y="467">P2.2/A10</text><text x="1049.300" y="487">P2.3/A11</text><text x="1049.300" y="507">P2.4/A12</text><text x="1049.300" y="528">P2.5/A13</text><text x="1049.300" y="549">P2.6/A14</text><text x="1049.300" y="569">P2.7/A15</text>
            <text x="1049.300" y="610">P3.0/RXD</text><text x="1049.300" y="631">P3.1/TXD</text><text x="1049.300" y="651">P3.2/INT0</text><text x="1049.300" y="671">P3.3/INT1</text><text x="1049.300" y="692">P3.4/T0</text><text x="1049.300" y="713">P3.5/T1</text><text x="1049.300" y="733">P3.6/WR</text><text x="1049.300" y="753">P3.7/RD</text>
            <text x="1398.300" y="610">T1OUT</text><text x="1398.300" y="631">R1IN</text><text x="1398.300" y="651">T2OUT</text><text x="1398.300" y="671">R2IN</text><text x="1398.300" y="712.700">VS+</text><text x="1398.300" y="733.300">VS-</text>
          </g>
          <text x="1229.300" y="567.700">C1+</text><text x="1354.300" y="567.700">C1-</text><text x="1214" y="610">T1IN</text><text x="1214" y="631">R1OUT</text><text x="1214" y="651">T2IN</text><text x="1214" y="671">R2OUT</text><text x="1229.300" y="774">C2+</text><text x="1354.300" y="774">C2-</text>
          <text x="1604" y="364">RXD</text><text x="1604" y="405">TXD</text><text x="1604" y="446">RTS</text><text x="1604" y="486.700">CTS</text>
        </g>
        <path d="M784 471.500h45M784 512.500h22M1013.500 636.500h35.800M1013.500 656.500h35.800M1021.800 718.500h27.500M1025.500 738.500h23.800" stroke="#111" stroke-width="1.300"/>

        <!-- Pin numbers -->
        <g font-size="16.500" fill="#111">
          <text x="735" y="231">19</text><text x="735" y="292.700">18</text><text x="743" y="374">9</text><text x="735" y="476.700">29</text><text x="735" y="496.700">30</text><text x="735" y="517.700">31</text>
          <g text-anchor="end">
            <text x="752" y="599.500">1</text><text x="752" y="620.500">2</text><text x="752" y="640.500">3</text><text x="752" y="660.500">4</text><text x="752" y="681.500">5</text><text x="752" y="702.500">6</text><text x="752" y="722.500">7</text><text x="752" y="742.500">8</text>
            <text x="1182" y="600">11</text><text x="1182" y="621">12</text><text x="1182" y="641">10</text><text x="1182" y="660.700">9</text>
          </g>
          <text x="1080.700" y="230.700">39</text><text x="1080.700" y="250.700">38</text><text x="1080.700" y="271.700">37</text><text x="1080.700" y="292.700">36</text><text x="1080.700" y="312.700">35</text><text x="1080.700" y="332.700">34</text><text x="1080.700" y="353.700">33</text><text x="1080.700" y="374.700">32</text>
          <text x="1080.700" y="414.700">21</text><text x="1080.700" y="435.700">22</text><text x="1080.700" y="456.700">23</text><text x="1080.700" y="476.700">24</text><text x="1080.700" y="496.700">25</text><text x="1080.700" y="517.700">26</text><text x="1080.700" y="538.700">27</text><text x="1080.700" y="558.700">28</text>
          <text x="1080.700" y="599.700">10</text><text x="1080.700" y="620.700">11</text><text x="1080.700" y="640.700">12</text><text x="1080.700" y="660.700">13</text><text x="1080.700" y="681.700">14</text><text x="1080.700" y="702.700">15</text><text x="1080.700" y="722.700">16</text><text x="1080.700" y="742.700">17</text>
          <text x="1231.700" y="517.700">1</text><text x="1353" y="517.700">3</text><text x="1230.700" y="824">4</text><text x="1353.300" y="824">5</text>
          <text x="1430.700" y="600">14</text><text x="1430.700" y="621">13</text><text x="1430.700" y="641">7</text><text x="1430.700" y="661">8</text><text x="1429.300" y="702.700">2</text><text x="1429.300" y="722.700">6</text>
        </g>

        <text x="1598" y="579" font-size="37" fill="#800000" class="font-['Liberation_Serif','Noto_Sans_CJK_SC',serif]">PC机虚拟终端</text>
      </svg>
    </div>
    <div class="flex-1 h-[842px] bg-[#a6c4de]"></div>
  </div>

  <!-- Status bar -->
  <div class="h-[37px] shrink-0 flex gap-[5px] font-['Liberation_Sans'] text-[13px]">
    <div class="w-[318px] flex items-center bg-gradient-to-b from-[#e6f2fa] to-[#b3d1e6] pl-[4px]">
      <div class="w-[2px] h-[30px] border-l-2 border-dotted border-[#8fa5b5]"></div>
      <svg class="w-[25px] h-[25px] ml-[14px]" viewBox="0 0 25 25"><defs><linearGradient id="gplay" x1="0" y1="0" x2="0" y2="1"><stop offset="0" stop-color="#22e022"/><stop offset="1" stop-color="#0a9a2a"/></linearGradient></defs><path d="M0 0l25 12.500L0 25z" fill="url(#gplay)"/></svg>
      <svg class="w-[24px] h-[25px] ml-[20px]" viewBox="0 0 24 25"><rect width="5" height="25" fill="#0a3be0"/><path d="M8 0l16 12.500L8 25z" fill="#0a3be0"/></svg>
      <svg class="w-[17px] h-[25px] ml-[24px]" viewBox="0 0 17 25"><rect width="6.500" height="25" fill="#0a3be0"/><rect x="10.500" width="6.500" height="25" fill="#0a3be0"/></svg>
      <div class="w-[23px] h-[24px] ml-[24px] bg-gradient-to-b from-[#1060e8] to-[#0010f0]"></div>
      <div class="w-px h-[25px] bg-[#8aa] ml-[14px]"></div>
      <svg class="w-[24px] h-[25px] ml-[11px]" viewBox="0 0 24 25"><ellipse cx="12" cy="12.500" rx="12" ry="12.500" fill="#1ea52e"/><text x="12" y="20" text-anchor="middle" font-size="20" font-weight="700" fill="#fff" class="font-['Liberation_Serif']">i</text></svg>
      <span class="ml-[5px] mt-[2px] text-[13.300px] text-[#111] whitespace-nowrap">5 Message(s)</span>
    </div>
    <div class="w-[411px] flex items-center bg-gradient-to-b from-[#e6f2fa] to-[#b3d1e6] pl-[4px]">
      <div class="w-[2px] h-[30px] border-l-2 border-dotted border-[#8fa5b5]"></div>
      <span class="ml-[8px] mt-[2px] text-[#1f4a1f] whitespace-nowrap">ANIMATING: 00:00:12.400000 (CPU load 4%)</span>
    </div>
    <div class="flex-1 flex items-center bg-gradient-to-b from-[#e6f2fa] to-[#b3d1e6] pl-[6px] relative">
      <div class="w-[2px] h-[30px] border-l-2 border-dotted border-[#8fa5b5]"></div>
      <span class="absolute left-[534px] top-[12px] text-black">-3800.0</span>
      <span class="absolute left-[1107px] top-[12px] text-black">-300.0</span>
    </div>
  </div>
</div>

<!-- Virtual Terminal window -->
<div class="absolute left-[753px] top-[789px] w-[432px] h-[241px] bg-[#f0f0f0] shadow-[0_0_8px_rgba(0,0,0,0.4)] flex flex-col">
  <div class="h-[37px] bg-white flex items-start shrink-0 relative">
    <span class="ml-[9px] mt-[8px] text-[15px] leading-[20px] text-[#111] font-['Noto_Sans',sans-serif]">Virtual Terminal</span>
    <div class="absolute left-[406px] top-[8px] w-[25px] h-[25px] bg-[#c75050] flex items-center justify-center">
      <svg class="w-[8px] h-[8px]" viewBox="0 0 8 8"><path d="M1 1l6 6M7 1L1 7" stroke="#fff" stroke-width="2"/></svg>
    </div>
  </div>
  <div class="ml-[2px] mr-[2px] h-[199px] border-2 border-[#a0a0a0] border-b-white border-r-white flex">
    <div class="w-[404px] h-full bg-black relative overflow-hidden">
      <div class="pl-[2px] pt-[3px] text-[16px] leading-[18px] font-bold tracking-[0.35px] text-[#00e000] font-['Liberation_Mono',monospace] whitespace-nowrap">1234567891234567891234567891234567891234</div>
      <div class="absolute left-[400px] top-0 w-px h-[18px] bg-white"></div>
    </div>
    <div class="flex-1 bg-[#eeeeee] flex flex-col justify-between items-center py-[7px]">
      <svg class="w-[12px] h-[8px]" viewBox="0 0 12 8" fill="none" stroke="#c0c0c0" stroke-width="2"><path d="M1 7l5-5 5 5"/></svg>
      <svg class="w-[12px] h-[8px]" viewBox="0 0 12 8" fill="none" stroke="#c0c0c0" stroke-width="2"><path d="M1 1l5 5 5-5"/></svg>
    </div>
  </div>
</div>

<!-- Watermark and tray strip -->
<div class="absolute left-[1672px] top-[998px] text-[20px] leading-[26px] text-[#f4f4f4] [text-shadow:1px_1px_1px_#555] font-['Noto_Sans','Noto_Sans_CJK_SC',sans-serif] whitespace-nowrap">CSDN @假装不是小源同学</div>
<div class="absolute left-[1909px] top-[972px] w-[11px] h-[58px] bg-[#3c4048] rounded-tl-[4px] flex flex-col justify-end gap-[2px] p-[2px] pb-[4px]">
  <div class="h-[1px] bg-[#888]"></div><div class="h-[1px] bg-[#888]"></div><div class="h-[1px] bg-[#888]"></div><div class="h-[1px] bg-[#bcbc50]"></div><div class="h-[1px] bg-[#bcbc50]"></div><div class="h-[1px] bg-[#9fc860]"></div><div class="h-[1px] bg-[#9fc860]"></div><div class="h-[1px] bg-[#9fc860]"></div><div class="h-[1px] bg-[#9fc860]"></div>
</div>
</body>
</html>
